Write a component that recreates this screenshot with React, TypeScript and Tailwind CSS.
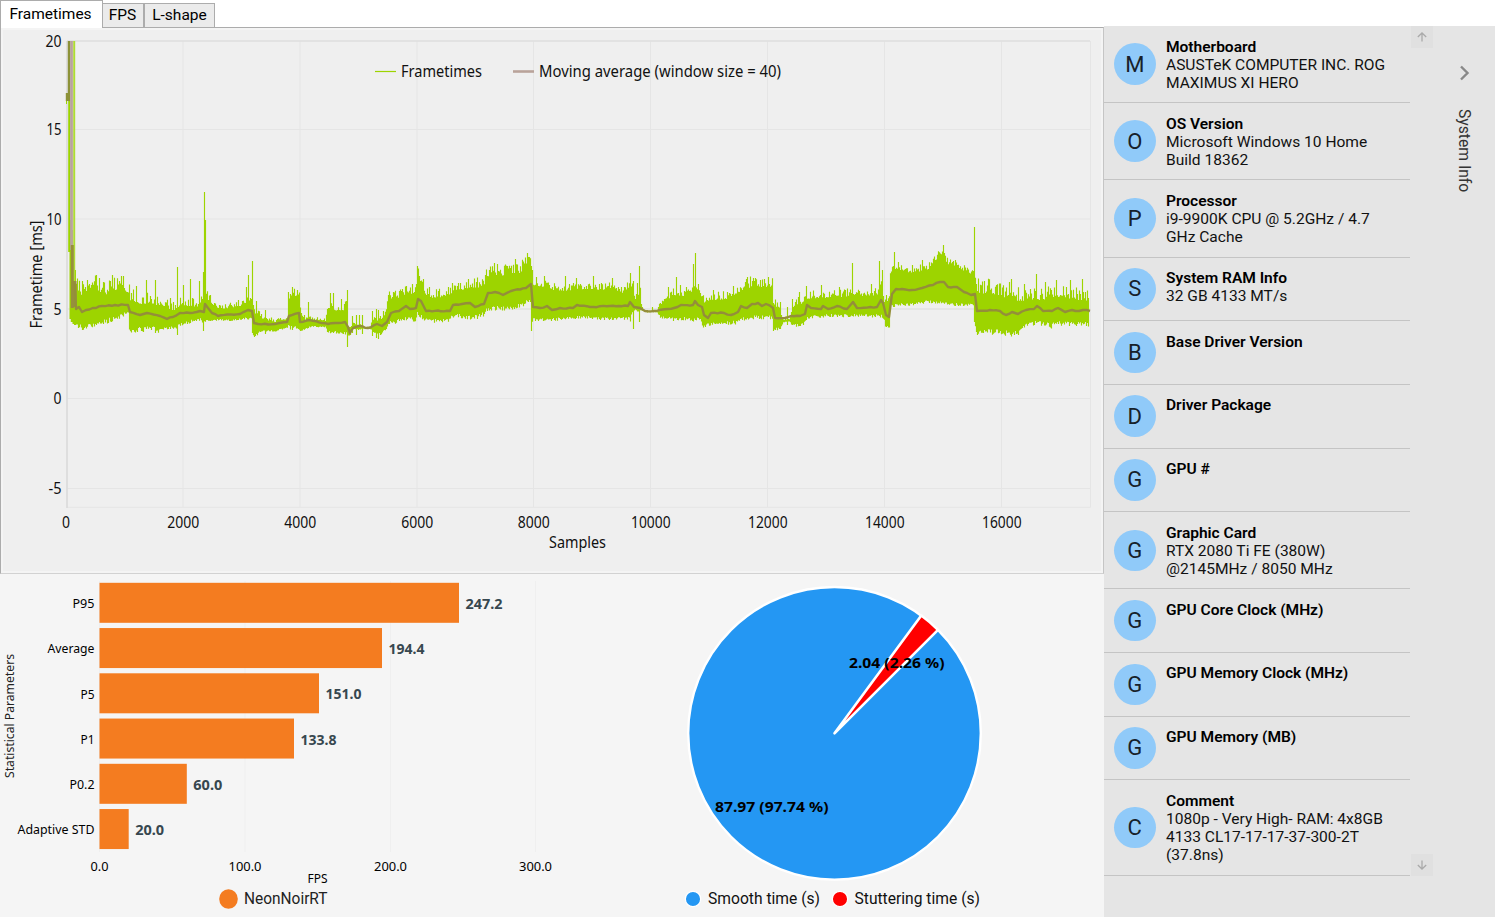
import React from "react";

const envelope: [number, number, number][] = [
  [76, 286, 323], [80, 293, 325], [90, 292, 324], [96, 288, 322], [105, 293, 320], [112, 288, 317],
  [120, 288, 314], [126, 290, 312], [128, 292, 313], [129, 298, 328], [140, 302, 328], [150, 302, 327], [160, 304, 329],
  [170, 308, 327], [176, 308, 326], [180, 305, 324], [190, 304, 321], [200, 305, 319], [204, 290, 321],
  [208, 298, 319], [213, 304, 320], [220, 307, 320], [230, 306, 320], [240, 304, 319], [250, 298, 318],
  [252, 300, 318], [253, 312, 335], [258, 311, 333], [262, 317, 331], [275, 320, 331], [287, 317, 328], [288, 297, 326],
  [299, 293, 327], [300, 311, 331], [305, 318, 329], [310, 318, 327], [325, 319, 327], [327, 309, 331],
  [346, 308, 332], [347, 326, 336], [350, 326, 335], [352, 322, 329], [358, 323, 330], [363, 326, 329],
  [370, 326, 330], [372, 318, 331], [380, 319, 334], [385, 312, 330], [388, 298, 322], [392, 298, 322],
  [400, 295, 319], [407, 291, 317], [415, 293, 319], [417, 275, 311], [419, 278, 313], [422, 284, 316],
  [426, 294, 319], [433, 296, 320], [448, 295, 319], [452, 290, 315], [460, 288, 315], [472, 286, 317],
  [483, 285, 313], [487, 276, 308], [493, 273, 307], [500, 274, 307], [513, 271, 307], [520, 271, 304],
  [526, 262, 301], [530, 260, 299], [532, 275, 319], [533, 283, 319], [543, 285, 319], [553, 288, 319],
  [563, 289, 318], [573, 288, 317], [587, 287, 317], [600, 288, 318], [613, 287, 318], [622, 291, 318],
  [630, 284, 318], [633, 291, 310], [634, 298, 310], [640, 292, 311], [641, 303, 311], [644, 309, 312],
  [647, 310, 313], [657, 309, 313], [658, 305, 314], [660, 303, 317], [667, 298, 318], [673, 293, 318],
  [683, 294, 318], [693, 289, 318], [700, 291, 317], [703, 301, 326], [707, 299, 324], [713, 299, 322],
  [727, 297, 322], [737, 291, 321], [743, 288, 317], [753, 285, 316], [772, 285, 316], [773, 301, 328],
  [780, 312, 328], [783, 318, 323], [789, 318, 322], [792, 306, 325], [803, 301, 324], [806, 297, 317],
  [817, 296, 316], [828, 296, 315], [840, 295, 315], [850, 294, 315], [867, 294, 315], [878, 293, 315],
  [881, 285, 315], [884, 300, 320], [885, 302, 326], [889, 299, 326], [890, 273, 305], [895, 269, 305], [900, 268, 304],
  [910, 271, 304], [927, 268, 301], [935, 259, 302], [940, 254, 302], [943, 257, 302], [947, 262, 303],
  [957, 265, 304], [967, 271, 304], [974, 273, 305], [975, 280, 325], [976, 288, 330], [980, 294, 330],
  [988, 290, 330], [1000, 295, 329], [1003, 295, 331], [1017, 299, 332], [1022, 299, 326], [1027, 298, 322],
  [1047, 298, 322], [1050, 297, 325], [1053, 295, 322], [1067, 296, 322], [1089, 300, 323],
];

const spikes: [number, number, number][] = [
  [82, 281, 324], [87, 280, 326], [96, 275, 324], [99, 278, 322], [110, 281, 318], [121, 276, 313], [123, 276, 313],
  [131, 293, 328], [136, 286, 329], [146, 280, 329], [155, 280, 333], [170, 298, 329], [177, 267, 335],
  [183, 285, 324], [190, 279, 321], [199, 281, 319], [203, 272, 331], [204, 192, 320], [205, 220, 320], [238, 300, 319],
  [246, 287, 318], [248, 275, 318], [252, 261, 333], [256, 301, 334], [265, 310, 334], [290, 294, 325],
  [297, 290, 325], [308, 302, 327], [330, 293, 332], [333, 293, 333], [341, 299, 331], [347, 290, 347],
  [352, 316, 333], [356, 315, 335], [359, 315, 329], [362, 315, 334], [372, 311, 336], [376, 309, 338],
  [378, 310, 339], [381, 319, 333], [388, 295, 324], [402, 289, 319], [406, 286, 318], [417, 266, 312],
  [423, 279, 316], [448, 287, 319], [460, 283, 316], [494, 263, 307], [515, 259, 307], [527, 253, 301],
  [529, 257, 299], [531, 266, 331], [536, 277, 319], [544, 276, 319], [565, 276, 319], [576, 278, 318],
  [593, 276, 317], [612, 278, 318], [630, 273, 318], [633, 281, 329], [637, 283, 310], [639, 266, 322],
  [652, 307, 311], [668, 287, 318], [676, 277, 318], [680, 285, 318], [693, 264, 318], [695, 253, 320],
  [698, 284, 317], [713, 290, 322], [723, 292, 322], [755, 278, 317], [764, 279, 317], [768, 279, 317],
  [780, 302, 329], [787, 307, 325], [792, 299, 325], [799, 292, 325], [806, 286, 320], [821, 285, 316],
  [839, 287, 316], [852, 263, 315], [871, 284, 315], [879, 261, 316], [882, 270, 316], [886, 295, 326],
  [894, 252, 306], [898, 262, 304], [922, 260, 301], [943, 245, 302], [955, 260, 304], [964, 268, 304],
  [974, 227, 322], [984, 281, 330], [989, 280, 329], [1003, 289, 332], [1009, 282, 330], [1011, 279, 331],
  [1024, 284, 325], [1036, 274, 323], [1045, 282, 323], [1056, 280, 323], [1070, 280, 323], [1082, 279, 323],
];

const average: [number, number][] = [
  [75, 283], [76, 309], [79, 307], [82, 312], [86, 310], [96, 308], [102, 306], [115, 305], [128, 305], [130, 312],
  [140, 315], [147, 313], [160, 316], [167, 319], [173, 317], [180, 313], [190, 313], [200, 311], [204, 312],
  [205, 304], [208, 308], [212, 313], [218, 316], [240, 314], [248, 310], [252, 311], [254, 323], [258, 324],
  [275, 324], [287, 322], [289, 316], [299, 313], [300, 322], [310, 320], [328, 324], [345, 322], [348, 327],
  [350, 333], [353, 328], [359, 326], [368, 328], [377, 324], [382, 326], [387, 322], [391, 313], [399, 311],
  [406, 306], [410, 309], [416, 308], [418, 299], [421, 301], [426, 311], [450, 311], [453, 305], [462, 304],
  [470, 303], [475, 307], [484, 304], [488, 293], [495, 292], [503, 295], [511, 291], [526, 288], [531, 284],
  [533, 307], [540, 308], [547, 306], [552, 310], [560, 308], [573, 308], [577, 305], [590, 307], [610, 306],
  [628, 306], [630, 302], [634, 307], [640, 308], [645, 311], [654, 311], [668, 309], [674, 308], [681, 305],
  [693, 305], [695, 301], [698, 305], [702, 307], [704, 315], [708, 318], [711, 313], [724, 313], [731, 315],
  [738, 312], [741, 306], [747, 308], [752, 304], [758, 303], [762, 306], [766, 304], [773, 308], [775, 318],
  [785, 318], [791, 316], [800, 316], [805, 314], [807, 305], [811, 308], [821, 309], [823, 306], [828, 309],
  [837, 306], [847, 309], [853, 302], [857, 308], [877, 307], [881, 300], [883, 303], [886, 315], [889, 317],
  [892, 294], [896, 289], [902, 289], [912, 290], [922, 288], [933, 285], [940, 282], [944, 282], [948, 287],
  [957, 287], [964, 292], [971, 295], [975, 294], [977, 311], [990, 310], [1000, 311], [1006, 315], [1012, 312],
  [1018, 314], [1026, 310], [1034, 309], [1037, 306], [1043, 311], [1052, 311], [1058, 308], [1065, 312],
  [1072, 310], [1079, 311], [1083, 310], [1090, 311],
];

const noise = (n: number) => {
  const v = Math.sin(n * 127.1 + 11.7) * 43758.5453;
  return v - Math.floor(v);
};

const framePath = () => {
  let d = "";
  let k = 0;
  for (let x = 76; x <= 1088; x++) {
    while (k < envelope.length - 2 && envelope[k + 1][0] <= x) k++;
    const a = envelope[k];
    const b = envelope[k + 1];
    const t = Math.min(1, (x - a[0]) / (b[0] - a[0]));
    const top = a[1] + (b[1] - a[1]) * t;
    const bottom = a[2] + (b[2] - a[2]) * t;
    const calm = (x > 880 && x < 975) || (x > 533 && x < 630) ? 0.65 : x > 976 || x < 203 ? 1.3 : 1;
    const amp = Math.min(12, (bottom - top) * 0.4) * calm;
    const y1 = top + 2 - amp * Math.pow(noise(x), 2);
    const y2 = bottom - 1 + amp * 0.4 * noise(x + 5000);
    d += `M${x + 0.5} ${y1.toFixed(1)}V${y2.toFixed(1)}`;
  }
  for (const [x, y1, y2] of spikes) d += `M${x + 0.5} ${y1}V${y2}`;
  return d;
};

const averagePath = () => {
  let d = "M" + average[0].join(" ");
  for (let i = 1; i < average.length; i++) {
    const [x0, y0] = average[i - 1];
    const [x1, y1] = average[i];
    const steps = Math.max(1, Math.floor((x1 - x0) / 3));
    for (let s = 1; s <= steps; s++) {
      const w = s < steps ? (noise(x0 * 3 + s) - 0.5) * 1.3 : 0;
      d += `L${x0 + ((x1 - x0) * s) / steps} ${(y0 + ((y1 - y0) * s) / steps + w).toFixed(1)}`;
    }
  }
  return d;
};

function Label({ x, y, w, s = 16, anchor = "start", bold = false, fill = "#111", font = "Noto Sans", rotate, children }: {
  x: number; y: number; w: number; s?: number; anchor?: "start" | "middle" | "end"; bold?: boolean;
  fill?: string; font?: string; rotate?: number; children: string;
}) {
  return (
    <text x={x} y={y} fontSize={s} textAnchor={anchor} textLength={w} lengthAdjust="spacingAndGlyphs" fill={fill}
      fontWeight={bold ? 700 : 400} fontFamily={`"${font}", sans-serif`}
      transform={rotate === undefined ? undefined : `rotate(${rotate} ${x} ${y})`}>
      {children}
    </text>
  );
}

function FrametimeChart() {
  const columns = [183, 300, 417, 533.5, 650.5, 767.5, 884.5, 1001.5];
  const rows: [string, number, number][] = [["20", 41, 16], ["15", 129.5, 15], ["10", 219, 15], ["5", 309, 8], ["0", 398.5, 8], ["-5", 488.5, 13]];
  return (
    <svg width="1102" height="545" viewBox="1 28 1102 545" className="block">
      <g stroke="#e5e5e5" strokeWidth="1">
        {columns.map((x) => <path key={x} d={`M${x} 41V507`} />)}
        {rows.map(([t, y]) => <path key={t} d={`M67 ${y}H1090`} />)}
        <path d="M67 507.3H1090.5V41" fill="none" />
        <path d="M67 41H1090" strokeWidth="1.6" stroke="#dfdfdf" />
        <path d="M67 309H1090" strokeWidth="1.8" />
        <path d="M67 41V508" strokeWidth="1.8" stroke="#dcdcdc" />
      </g>
      {rows.map(([t, y, w]) => <Label key={t} x={61.5} y={y + 5.8} w={w} anchor="end">{t}</Label>)}
      <Label x={66} y={528} w={8} anchor="middle">0</Label>
      {columns.map((x, i) => (
        <Label key={x} x={x + 0.3} y={528} w={i < 4 ? 32 : 39.5} anchor="middle">{String((i + 1) * 2000)}</Label>
      ))}
      <Label x={577.5} y={548} w={57} anchor="middle">Samples</Label>
      <Label x={41.8} y={274.5} w={108} anchor="middle" rotate={-90}>Frametime [ms]</Label>
      <path d={framePath()} stroke="#9dd400" strokeWidth="1.15" />
      <path d="M66.5 94V104" stroke="#9dd400" />
      <path d="M69.2 100V252M70.5 220V319M71.8 230V322M73.5 300V324M75 270V325" stroke="#9dd400" strokeWidth="2" />
      <path d="M74.2 41V300" stroke="#aedb33" strokeWidth="2" />
      <path d="M67 93V101M69 41V101" stroke="#8d9238" strokeWidth="2.4" />
      <path d="M71.5 41V250" stroke="#b9a39f" strokeWidth="2.8" />
      <path d="M72.3 245V308M75 281V307" stroke="#968f3d" strokeWidth="3" />
      <path d={averagePath()} fill="none" stroke="#948e3a" strokeWidth="2.4" strokeLinejoin="round" />
      <path d="M375 71.5H396" stroke="#9dd400" strokeWidth="1.2" />
      <Label x={401} y={77} w={81}>Frametimes</Label>
      <path d="M513 71.5H534" stroke="#b9a39a" strokeWidth="2.6" />
      <Label x={539} y={77} w={242}>Moving average (window size = 40)</Label>
    </svg>
  );
}

function StatisticsChart() {
  const bars: [string, string, number, number, number][] = [
    ["P95", "247.2", 359.5, 22, 37], ["Average", "194.4", 282.5, 47, 36], ["P5", "151.0", 219.5, 14, 36],
    ["P1", "133.8", 194.5, 14, 36], ["P0.2", "60.0", 87.3, 25, 29], ["Adaptive STD", "20.0", 29.2, 77, 29],
  ];
  return (
    <svg width="600" height="343" viewBox="0 574 600 343" className="block shrink-0">
      {[99.5, 245, 390.5, 535.5].map((x, i) => (
        <g key={x}>
          <path d={`M${x} 581V852`} stroke="#efefef" />
          <Label x={x} y={871} w={i ? 33 : 18} s={12.5} anchor="middle" fill="#000">{`${i * 100}.0`}</Label>
        </g>
      ))}
      {bars.map(([name, value, w, nameW, valueW], i) => {
        const y = 582.8 + i * 45.25;
        return (
          <g key={name}>
            <rect x={99.5} y={y} width={w} height={40} fill="#f47c20" />
            <Label x={94.5} y={y + 25.2} w={nameW} s={13.3} anchor="end" fill="#000">{name}</Label>
            <Label x={99.5 + w + 6.5} y={y + 26} w={valueW} s={14} bold fill="#37474f">{value}</Label>
          </g>
        );
      })}
      <Label x={317.5} y={883} w={20} s={12.5} anchor="middle" fill="#000">FPS</Label>
      <Label x={13.5} y={716} w={124} s={13} anchor="middle" rotate={-90} fill="#222">Statistical Parameters</Label>
      <ellipse cx="228.5" cy="899" rx="9.3" ry="9.8" fill="#f47c20" />
      <Label x={244} y={904} w={83.5} s={15.6} font="Roboto" fill="#222">NeonNoirRT</Label>
    </svg>
  );
}

function StutterPie() {
  return (
    <svg width="504" height="343" viewBox="600 574 504 343" className="block shrink-0">
      <circle cx="834.5" cy="733.3" r="146.3" fill="#2497f3" stroke="#fff" strokeWidth="2.4" />
      <path d="M834.5 733.3L921.3 615.5A146.3 146.3 0 0 1 938 629.8Z" fill="#f00" stroke="#fff" strokeWidth="2.6" strokeLinejoin="round" />
      <Label x={849} y={668} w={95.5} s={14.6} bold fill="#000">2.04 (2.26 %)</Label>
      <Label x={715} y={812} w={113.5} s={14.6} bold fill="#000">87.97 (97.74 %)</Label>
      <circle cx="693" cy="899" r="7.7" fill="#2497f3" stroke="#fff" strokeWidth="1.3" />
      <Label x={708} y={904} w={112} s={15.6} font="Roboto" fill="#111">Smooth time (s)</Label>
      <circle cx="840" cy="899" r="7.7" fill="#f00" stroke="#fff" strokeWidth="1.3" />
      <Label x={854.5} y={904} w={125.5} s={15.6} font="Roboto" fill="#111">Stuttering time (s)</Label>
    </svg>
  );
}

function InfoRow({ title, lines, className }: { title: string; lines: string[]; className: string }) {
  return (
    <div className={`flex w-[306px] shrink-0 items-center border-b border-[#c4c4c4] pl-[10px] ${className}`}>
      <div className="flex size-[41.5px] shrink-0 items-center justify-center rounded-full bg-[#90caf9] text-[22px] text-[#17212a]">{title[0]}</div>
      <div className="ml-[10.5px] self-start whitespace-nowrap pt-[11.5px] text-[15.55px] leading-[18.2px] text-[#111]">
        <div className="font-semibold tracking-[-0.02px] text-black">{title}</div>
        {lines.map((line) => <div key={line}>{line}</div>)}
      </div>
    </div>
  );
}

export default function App() {
  return (
    <div className="flex h-[917px] w-[1495px] overflow-hidden bg-white font-['Roboto',sans-serif]">
      <main className="flex w-[1104px] shrink-0 flex-col">
        <div className="flex h-[27px] shrink-0 items-end text-[15.5px] leading-none text-black">
          <div className="z-10 -mb-px flex h-[28px] w-[103px] items-center justify-center border border-b-0 border-[#acacac] bg-white pr-[2px]">Frametimes</div>
          <div className="flex h-[24px] w-[41px] items-center justify-center border border-b-0 border-l-0 border-[#acacac] bg-[#ebebeb] pr-px">FPS</div>
          <div className="flex h-[24px] w-[71px] items-center justify-center border border-b-0 border-[#acacac] bg-[#ebebeb]">L-shape</div>
        </div>
        <div className="h-[547px] shrink-0 border border-[#acacac] border-b-[#d2d2d2] border-r-[#c5c5c5] bg-[#efefef] shadow-[inset_0_0_0_2px_#f4f4f4]">
          <FrametimeChart />
        </div>
        <div className="flex h-[343px] bg-[#f5f5f5]">
          <StatisticsChart />
          <StutterPie />
        </div>
      </main>
      <aside className="mt-[26px] flex h-[891px] flex-1 bg-[#e5e5e5]">
        <div className="flex w-[306px] shrink-0 flex-col">
          <InfoRow title="Motherboard" lines={["ASUSTeK COMPUTER INC. ROG", "MAXIMUS XI HERO"]} className="h-[77px]" />
          <InfoRow title="OS Version" lines={["Microsoft Windows 10 Home", "Build 18362"]} className="h-[77px]" />
          <InfoRow title="Processor" lines={["i9-9900K CPU @ 5.2GHz / 4.7", "GHz Cache"]} className="h-[77.5px]" />
          <InfoRow title="System RAM Info" lines={["32 GB 4133 MT/s"]} className="h-[63.7px]" />
          <InfoRow title="Base Driver Version" lines={[]} className="h-[63.7px]" />
          <InfoRow title="Driver Package" lines={[]} className="h-[63.7px]" />
          <InfoRow title="GPU #" lines={[]} className="h-[63.7px]" />
          <InfoRow title="Graphic Card" lines={["RTX 2080 Ti FE (380W)", "@2145MHz / 8050 MHz"]} className="h-[77px]" />
          <InfoRow title="GPU Core Clock (MHz)" lines={[]} className="h-[63.7px]" />
          <InfoRow title="GPU Memory Clock (MHz)" lines={[]} className="h-[63.7px]" />
          <InfoRow title="GPU Memory (MB)" lines={[]} className="h-[63.7px]" />
          <InfoRow title="Comment" lines={["1080p - Very High- RAM: 4x8GB", "4133 CL17-17-17-37-300-2T", "(37.8ns)"]} className="h-[95.5px]" />
        </div>
        <div className="ml-px flex h-[850px] w-[22px] shrink-0 flex-col justify-between">
          <div className="flex size-[22px] items-center justify-center bg-[#e0e0e0]">
            <svg width="10" height="10" viewBox="0 0 10 10" fill="none" stroke="#aaa" strokeWidth="1.3"><path d="M5 9.5V1.3M.8 5L5 1L9.2 5" /></svg>
          </div>
          <div className="flex size-[22px] items-center justify-center bg-[#e0e0e0]">
            <svg width="10" height="10" viewBox="0 0 10 10" fill="none" stroke="#aaa" strokeWidth="1.3"><path d="M5 .5V8.7M.8 5L5 9L9.2 5" /></svg>
          </div>
        </div>
        <div className="flex flex-1 flex-col items-center pt-[38px]">
          <svg width="12" height="18" viewBox="0 0 12 18" fill="none" stroke="#888" strokeWidth="2.4" className="ml-px"><path d="M2 2.5L8.5 9L2 15.5" /></svg>
          <div className="mt-[27px] text-[15.7px] leading-[18px] text-[#333] [writing-mode:vertical-rl]">System Info</div>
        </div>
      </aside>
    </div>
  );
}
